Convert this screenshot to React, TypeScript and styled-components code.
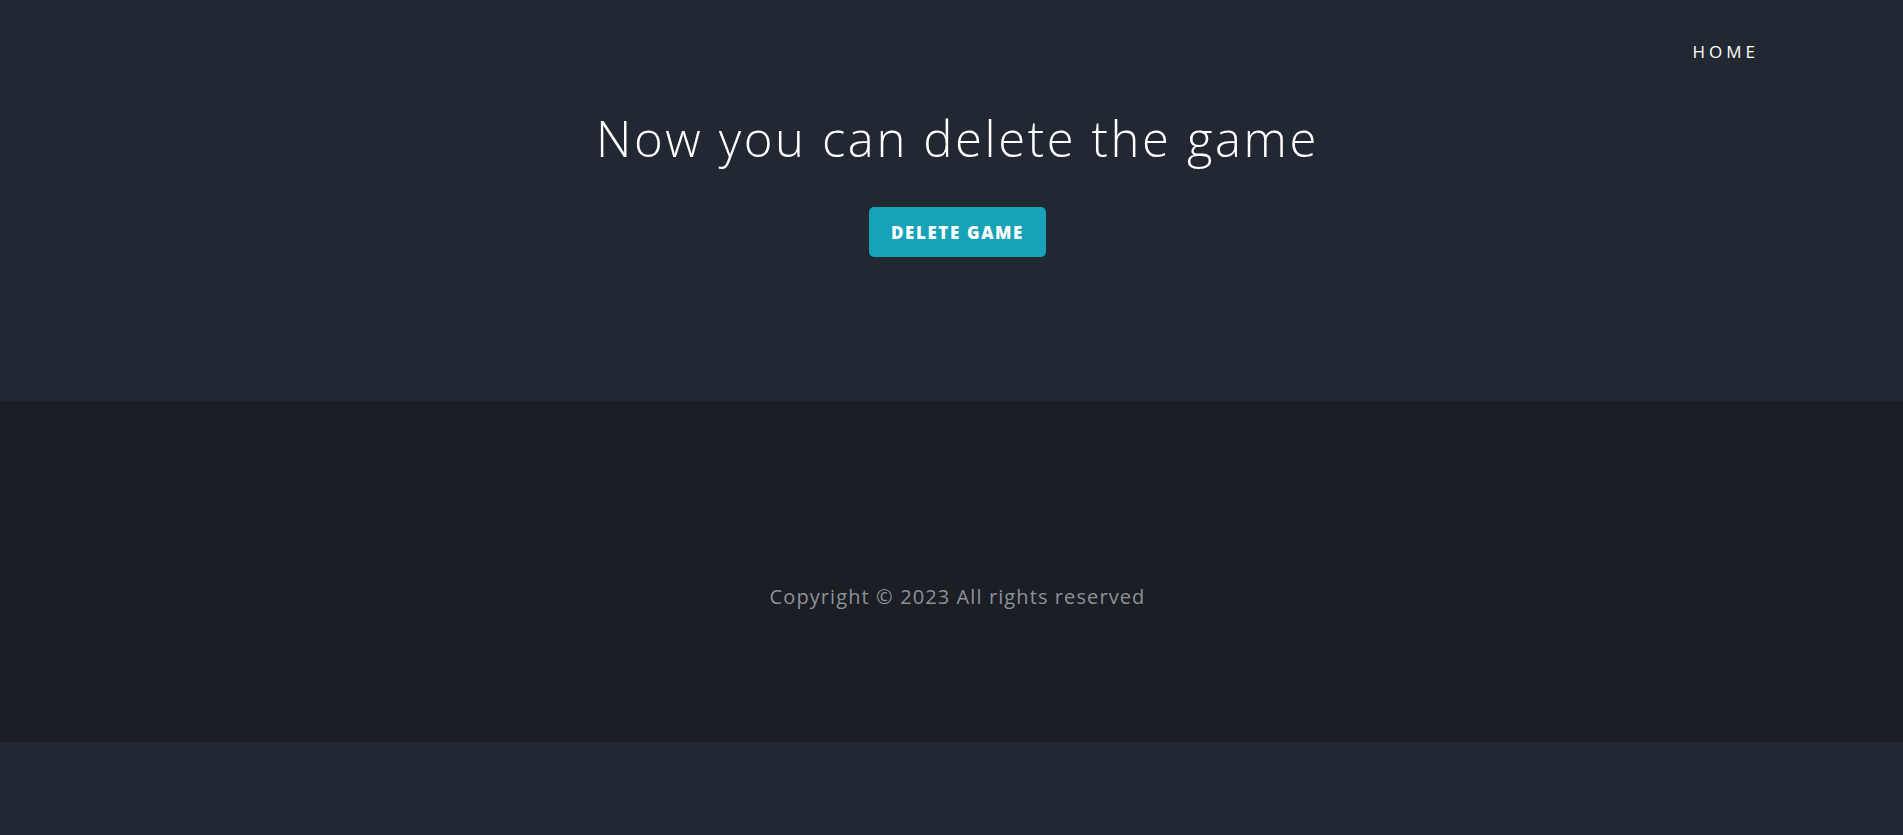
import React from "react";
import styled, { createGlobalStyle } from "styled-components";

const GlobalStyle = createGlobalStyle`
  html, body {
    margin: 0;
    padding: 0;
    background: #222831;
    font-family: "Open Sans", "DejaVu Sans", sans-serif;
  }
  * { box-sizing: border-box; }
`;

const Page = styled.div`
  display: flex;
  flex-direction: column;
`;

const Hero = styled.section`
  height: 401px;
  background: #222831;
  display: flex;
  flex-direction: column;
`;

const NavBar = styled.nav`
  display: flex;
  justify-content: flex-end;
  padding: 40px 144px 0 0;
  height: 103px;
`;

const NavLink = styled.a`
  color: #ffffff;
  font-size: 17px;
  letter-spacing: 4px;
  text-decoration: none;
  font-weight: 400;
  line-height: 24px;
  cursor: pointer;
`;

const Content = styled.div`
  display: flex;
  flex-direction: column;
  align-items: center;
  padding-left: 12px;
`;

const Title = styled.h1`
  margin: 0;
  color: #ffffff;
  font-weight: 300;
  font-size: 49px;
  line-height: 70px;
  letter-spacing: 2.6px;
`;

const DeleteButton = styled.button`
  margin-top: 34px;
  width: 177px;
  height: 50px;
  border: none;
  border-radius: 5px;
  background: #17a2b8;
  color: #ffffff;
  font-family: "Open Sans", "DejaVu Sans", sans-serif;
  font-weight: 800;
  font-size: 17px;
  letter-spacing: 1.6px;
  cursor: pointer;
`;

const Footer = styled.footer`
  height: 341px;
  background: #1b1e25;
  display: flex;
  justify-content: center;
  align-items: flex-start;
  padding: 181px 0 0 12px;
`;

const Copy = styled.p`
  margin: 0;
  color: #8d9299;
  font-size: 20px;
  line-height: 30px;
  letter-spacing: 1.1px;
`;

export default function App() {
  return (
    <Page>
      <GlobalStyle />
      <Hero>
        <NavBar>
          <NavLink>HOME</NavLink>
        </NavBar>
        <Content>
          <Title>Now you can delete the game</Title>
          <DeleteButton>DELETE GAME</DeleteButton>
        </Content>
      </Hero>
      <Footer>
        <Copy>Copyright © 2023 All rights reserved</Copy>
      </Footer>
    </Page>
  );
}
